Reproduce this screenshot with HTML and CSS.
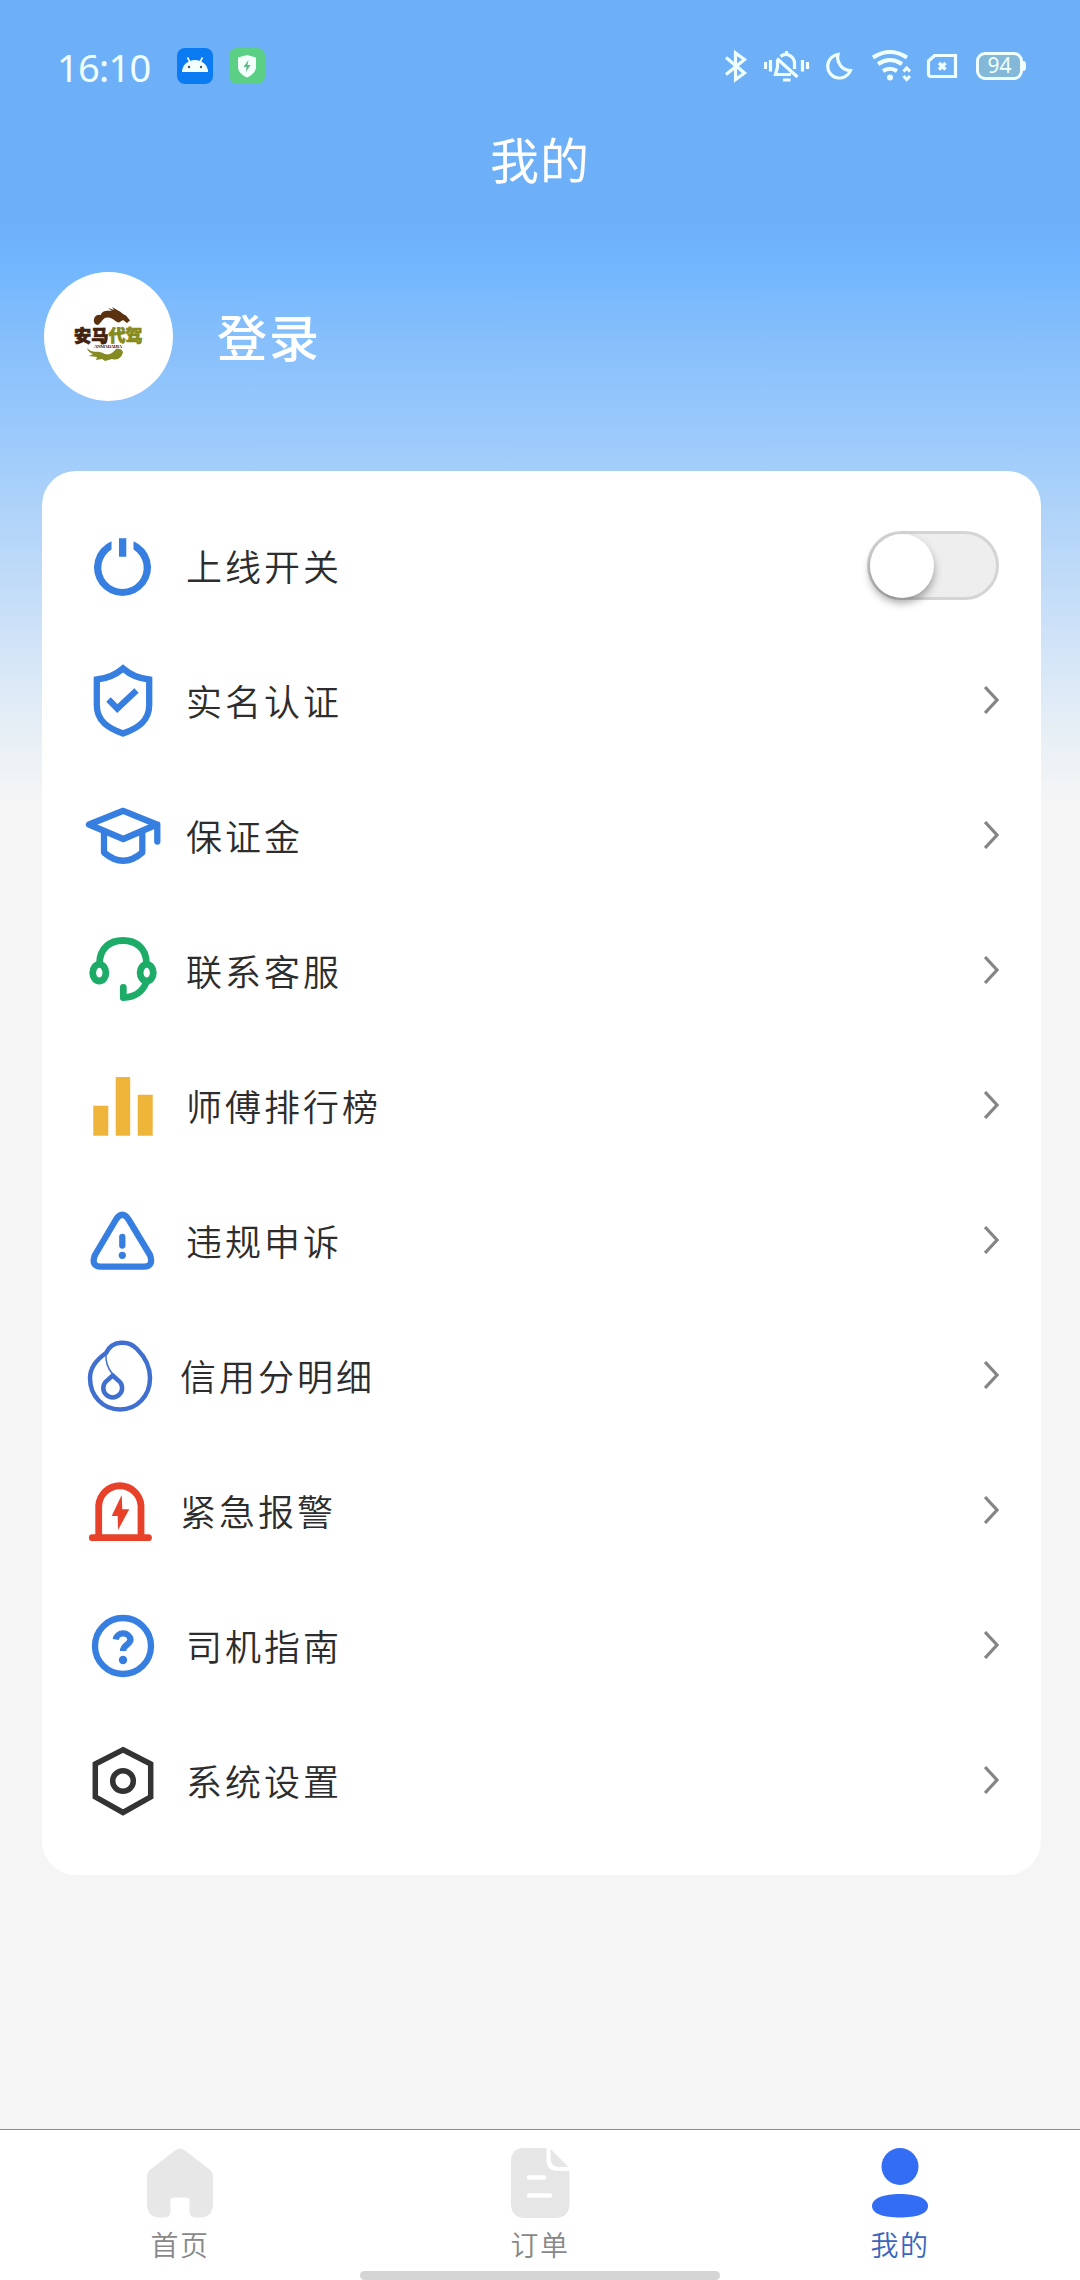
FILE: index.html
```html
<!DOCTYPE html>
<html lang="zh-CN">
<head>
<meta charset="utf-8">
<title>我的</title>
<link rel="stylesheet" href="styles.css">
</head>
<body>
<div class="page">
  <header class="status">
    <span class="time">16:10</span>
    <svg class="app" width="36" height="36" viewBox="0 0 36 36"><rect width="36" height="36" rx="8" fill="#0b7bf3"/><path d="M5 24A13 12 0 0 1 31 24Z" fill="#f2fffc"/><path d="M13 14L10.500 9.500M23 14L25.500 9.500" stroke="#f2fffc" stroke-width="1.600"/><circle cx="12" cy="19" r="1.200" fill="#456"/><circle cx="24" cy="19" r="1.200" fill="#456"/></svg>
    <svg class="app" width="36" height="36" viewBox="0 0 36 36"><rect width="36" height="36" rx="8" fill="#5bcf84"/><path d="M18 7L27 9.500V20Q26 26 18 29.500Q10 26 9 20V9.500Z" fill="#f2fffa"/><path d="M19.500 12L14.500 19H17.500L17 24L21.500 17H18.500Z" fill="#5bb98a"/></svg>
    <div class="signals">
      <svg width="24" height="36" viewBox="724 48 24 36"><path d="M726 57.500L744.500 73L735.500 79.500V53L744.500 59.500L726 74.500" class="sig"/></svg>
      <svg width="46" height="36" viewBox="764 48 46 36"><path d="M765.500 62V69M770.500 60V71.500M802.500 60V71.500M807.500 62V69M786.500 51V54M783 80H790.500M780.500 56.500C787 51.500 794.500 57 794.500 63.500V69M777.500 60V67L775.500 74.500H791M777 58.500L797.500 77" class="sig"/></svg>
      <svg width="27" height="36" viewBox="826 48 27 36"><path d="M838 54.500A11.800 11.800 0 1 0 850.500 70.500A13 13 0 0 1 838 54.500Z" class="sig"/></svg>
      <svg class="wifi" width="40" height="36" viewBox="871 48 40 36"><path d="M873 57.500Q890 46.500 907 57.500M878 64Q890 56 902 64M883 71Q890 66.500 897 71" class="sig wide"/><circle cx="890" cy="77.500" r="3" fill="#effffc"/><path d="M903.500 71.500L906.700 68L910 71.500M903.500 76L906.700 79.500L910 76" class="sig"/></svg>
      <svg class="sim" width="32" height="36" viewBox="926 48 32 36"><path d="M934.500 55.500H955.500V76.500H931Q928.500 76.500 928.500 74V61Z" class="sig"/><path d="M939 63L945.500 69.500M945.500 63L939 69.500" class="sig"/></svg>
      <div class="battery">94</div>
    </div>
  </header>
  <h1 class="title">我的</h1>
  <section class="profile">
    <svg class="avatar" width="129" height="129" viewBox="44 272 129 129">
      <circle cx="108.500" cy="336.500" r="64.500" fill="#fff"/>
      <path d="M94 322C93 317 97 313.500 101 315C101 311 107 310 112 311L108 308L114 310L112 307L118 310.500C121 312 124 315 126 315.500L130 320.500L127 323L123 320L119 322.500C115 322 113 317.500 108 317.500C103 317 102 322 98 325Q95 325 94 322Z" fill="#5a3210"/>
      <path d="M87 348C93 354 97 350 103 353C108 356 112 354 116 349C119 348 122 349 123 352C122 357 118 361 112 359L105 361L102 359L96 360L97 357L89 356L93 354Q88 352 87 348Z" fill="#858a22"/>
      <text x="74" y="341.500" class="logo"><tspan class="brown">安马</tspan><tspan class="olive">代驾</tspan></text>
      <text x="94" y="348" class="logo-sub" textLength="28">ANMADAIJIA</text>
    </svg>
    <span class="login">登录</span>
  </section>

  <main class="card">
    <div class="row">
      <svg class="icon" viewBox="0 0 100 135"><path d="M39.500 43.200A28.500 28.500 0 1 0 61.500 43.200V51.600A21.200 21.200 0 1 1 39.500 51.600ZM47 40.300H54.300V58.700H47Z" fill="#367fe0"/></svg>
      <span class="label">上线开关</span><span class="switch"><i class="knob"></i></span>
    </div>
    <div class="row">
      <svg class="icon blue" viewBox="0 0 100 135"><path d="M51 35.500Q40 45 24.800 46.500V72C24.800 88 36 95 51 100.500C66 95 77.200 88 77.200 72V46.500Q62 45 51 35.500ZM36.500 66.500L45.300 75.500L64.500 57.500"/></svg>
      <span class="label">实名认证</span><svg class="chev" viewBox="0 0 15 28"><path d="M1 1L13 14L1 27"/></svg>
    </div>
    <div class="row">
      <svg class="icon blue round" viewBox="0 0 100 135"><path d="M17 56.500L51.300 42.800L84.800 56.500L51.300 71Z M85.300 56.500V73.500M32 64V84.500Q51.300 101 70.300 84.500V64"/></svg>
      <span class="label">保证金</span><svg class="chev" viewBox="0 0 15 28"><path d="M1 1L13 14L1 27"/></svg>
    </div>
    <div class="row">
      <svg class="icon green round" viewBox="0 0 100 135"><path d="M27.500 60C28 45 38 37.500 51 37.500S74 45 74.500 60M74 80Q68 94 51.300 94.700V84.500"/><ellipse cx="27.300" cy="69.700" rx="6.600" ry="8.300"/><ellipse cx="74.700" cy="69.700" rx="6.600" ry="8.300"/></svg>
      <span class="label">联系客服</span><svg class="chev" viewBox="0 0 15 28"><path d="M1 1L13 14L1 27"/></svg>
    </div>
    <div class="row">
      <svg class="icon" viewBox="0 0 100 135"><path d="M21.300 67.700h15v30h-15zM43.700 39h14.500v58.700h-14.500zM65.700 56.700h15v41h-15z" fill="#efb53a"/></svg>
      <span class="label">师傅排行榜</span><svg class="chev" viewBox="0 0 15 28"><path d="M1 1L13 14L1 27"/></svg>
    </div>
    <div class="row">
      <svg class="icon blue round" viewBox="0 0 100 135"><path d="M44 46.500Q50.300 37 56.600 46.500L78 82Q82 93.500 72 93.700H29Q18.500 93.500 23 82ZM50.300 64V72.500"/><circle cx="50.300" cy="82.300" r="3.600" class="dot"/></svg>
      <span class="label">违规申诉</span><svg class="chev" viewBox="0 0 15 28"><path d="M1 1L13 14L1 27"/></svg>
    </div>
    <div class="row near">
      <svg class="icon indigo" viewBox="0 0 100 135"><path d="M34 45C40 32 57 32 65 41C74 50 78 60 78 70C78 88 65 101.500 48 101.500C31 101.500 18 88 18 70C18 60 24 52 34 45ZM40.700 67.500L47.500 73.500A9.400 9.400 0 1 1 33.900 73.500Z"/><path d="M34 45Q33 57 40.500 66" stroke-width="1.500"/></svg>
      <span class="label">信用分明细</span><svg class="chev" viewBox="0 0 15 28"><path d="M1 1L13 14L1 27"/></svg>
    </div>
    <div class="row near">
      <svg class="icon red round" viewBox="0 0 100 135"><path d="M20.300 94.700H76.500M26.700 94V62.500A21.200 21.200 0 0 1 69 62.500V94"/><path d="M49.700 52L39.700 73H45.700L46 87L57.300 66.300H50.300Z" class="dot"/></svg>
      <span class="label">紧急报警</span><svg class="chev" viewBox="0 0 15 28"><path d="M1 1L13 14L1 27"/></svg>
    </div>
    <div class="row">
      <svg class="icon blue" viewBox="0 0 100 135"><circle cx="51" cy="68" r="28"/><path d="M43.700 61.500A7.500 7.300 0 0 1 58.500 61.500C58.500 66.500 51 66.500 51 73"/><circle cx="51" cy="82" r="4.200" class="dot"/></svg>
      <span class="label">司机指南</span><svg class="chev" viewBox="0 0 15 28"><path d="M1 1L13 14L1 27"/></svg>
    </div>
    <div class="row">
      <svg class="icon dark" viewBox="0 0 100 135"><path d="M51 36.800L78.700 51V84L51 99.500L23.300 84V51Z"/><circle cx="51" cy="68" r="10.300"/></svg>
      <span class="label">系统设置</span><svg class="chev" viewBox="0 0 15 28"><path d="M1 1L13 14L1 27"/></svg>
    </div>
  </main>

  <nav class="tabs">
    <div class="tab">
      <svg width="72" height="72" viewBox="0 0 72 72"><path d="M31 3.500Q36 -.5 41 3.500L65 22Q69 25 69 29V58Q68 70 57 70.500H51Q45.500 70.500 45.500 64V54Q45.500 50.500 42 50.500H30Q26.500 50.500 26.500 54V64Q26.500 70.500 21 70.500H15Q4 70 3 58V29Q3 25 7 22Z" fill="#e7e7e7"/></svg>
      <span>首页</span>
    </div>
    <div class="tab">
      <svg width="72" height="72" viewBox="0 0 72 72"><path d="M20 1H42.500V13Q42.500 24 54 24H65.500V56Q65.500 71 51 71H21Q7 71 7 56V15Q7 1 20 1ZM46.500 2L64.500 20H56Q46.500 20 46.500 11Z" fill="#e6e6e6"/><path d="M25 30.500H40M25 48.500H46" stroke="#fff" stroke-width="4.500" fill="none" stroke-linecap="round"/></svg>
      <span>订单</span>
    </div>
    <div class="tab active">
      <svg width="72" height="72" viewBox="0 0 72 72"><circle cx="36" cy="19.500" r="18.500" fill="#336df4"/><path d="M8 59C8 51 20 47 36 47S64 51 64 59S52 70.500 36 70.500S8 67 8 59Z" fill="#336df4"/></svg>
      <span>我的</span>
    </div>
  </nav>
  <div class="home-bar"></div>
</div>
</body>
</html>
```
FILE: styles.css
```css
* { box-sizing: border-box; }
body {
  margin: 0;
  font-family: "Noto Sans CJK SC", sans-serif;
}
.page {
  position: relative;
  width: 1080px;
  height: 2280px;
  overflow: hidden;
  display: flex;
  flex-direction: column;
  background: linear-gradient(#6eb0f8 0, #6eb0f8 220px, #70b5fe 260px, #86bffb 340px, #9ccafb 440px, #b4d5f8 530px, #d0e3f8 640px, #e9f0f5 740px, #f5f5f5 805px);
}
svg { display: block; flex: none; }
.status {
  height: 120px;
  padding: 48px 57px 0 57px;
  display: flex;
  align-items: flex-start;
}
.time {
  width: 120px;
  font: 38px/38px "Noto Sans", sans-serif;
  letter-spacing: -0.7px;
  color: #f0fffd;
}
.app { margin-right: 16px; }
.signals {
  margin-left: auto;
  display: flex;
  gap: 16px;
}
.wifi { margin-left: 2px; }
.sim { margin-left: -1px; }
.sig {
  fill: none;
  stroke: #effffc;
  stroke-width: 3.2;
}
.wide { stroke-width: 4; }
.battery {
  position: relative;
  margin: 4px 0 0 2px;
  width: 47px;
  height: 28px;
  border: 3px solid #effffc;
  border-radius: 9px;
  background: #84b8d8;
  color: #effffc;
  font: 21px/21px "Noto Sans", sans-serif;
  text-align: center;
}
.battery::after {
  content: "";
  position: absolute;
  left: 44px;
  top: 6px;
  width: 3px;
  height: 10px;
  border-radius: 0 3px 3px 0;
  background: #effffc;
}
.title {
  margin: 0;
  height: 80px;
  font-size: 49px;
  line-height: 75px;
  font-weight: 400;
  letter-spacing: 1px;
  text-align: center;
  color: #fff;
}
.profile {
  height: 129px;
  margin: 72px 0 70px 44px;
  display: flex;
  align-items: center;
}
.logo {
  font-size: 17.2px;
  font-weight: 900;
  stroke-width: 0.7;
}
.brown { fill: #43220f; stroke: #43220f; }
.olive { fill: #858a1c; stroke: #858a1c; }
.logo-sub {
  font: bold 5px "Liberation Serif", serif;
  fill: #43220f;
}
.login {
  margin: -4px 0 0 44px;
  font-size: 50px;
  font-weight: 500;
  letter-spacing: 2px;
  color: #fff;
}
.card {
  width: 999px;
  height: 1404px;
  margin-left: 42px;
  padding: 27px 42px 27px 30px;
  border-radius: 34px;
  background: #fff;
}
.row {
  height: 135px;
  display: flex;
  align-items: center;
}
.icon {
  width: 100px;
  height: 135px;
  fill: none;
  stroke-width: 6;
}
.blue { stroke: #367fe0; color: #367fe0; stroke-width: 6.3; }
.indigo { stroke: #406fd0; stroke-width: 4.5; }
.green { stroke: #1dab68; stroke-width: 6.8; }
.red { stroke: #e8412a; color: #e8412a; stroke-width: 6.8; }
.dark { stroke: #333; stroke-width: 5.5; }
.round { stroke-linecap: round; stroke-linejoin: round; }
.dot { fill: currentColor; stroke: none; }
.label {
  margin: -1px 0 0 14px;
  font-size: 36px;
  line-height: 54px;
  font-weight: 350;
  letter-spacing: 3px;
  color: #2d2d2d;
}
.near .label { margin-left: 8px; }
.chev {
  width: 15px;
  height: 28px;
  margin-left: auto;
  margin-top: -1px;
  fill: none;
  stroke: #858585;
  stroke-width: 3.2;
}
.switch {
  width: 132px;
  height: 69px;
  margin-left: auto;
  border: 3px solid #d4d4d4;
  border-radius: 35px;
  background: #eee;
}
.knob {
  display: block;
  width: 64px;
  height: 64px;
  border-radius: 50%;
  background: #fff;
  box-shadow: 0 5px 9px rgba(0, 0, 0, 0.35);
}
.tabs {
  margin-top: auto;
  height: 151px;
  flex: none;
  border-top: 1px solid #8c8f8f;
  padding-top: 17px;
  display: flex;
  background: #fff;
}
.tab {
  flex: 1;
  display: flex;
  flex-direction: column;
  align-items: center;
  font-size: 28px;
  line-height: 40px;
  font-weight: 350;
  letter-spacing: 1.5px;
  color: #888;
}
.tab span { margin-top: 5px; }
.active { color: #3a66bd; }
.home-bar {
  position: absolute;
  left: 360px;
  bottom: 0;
  width: 360px;
  height: 9px;
  border-radius: 5px;
  background: #d5d5d5;
}
```
